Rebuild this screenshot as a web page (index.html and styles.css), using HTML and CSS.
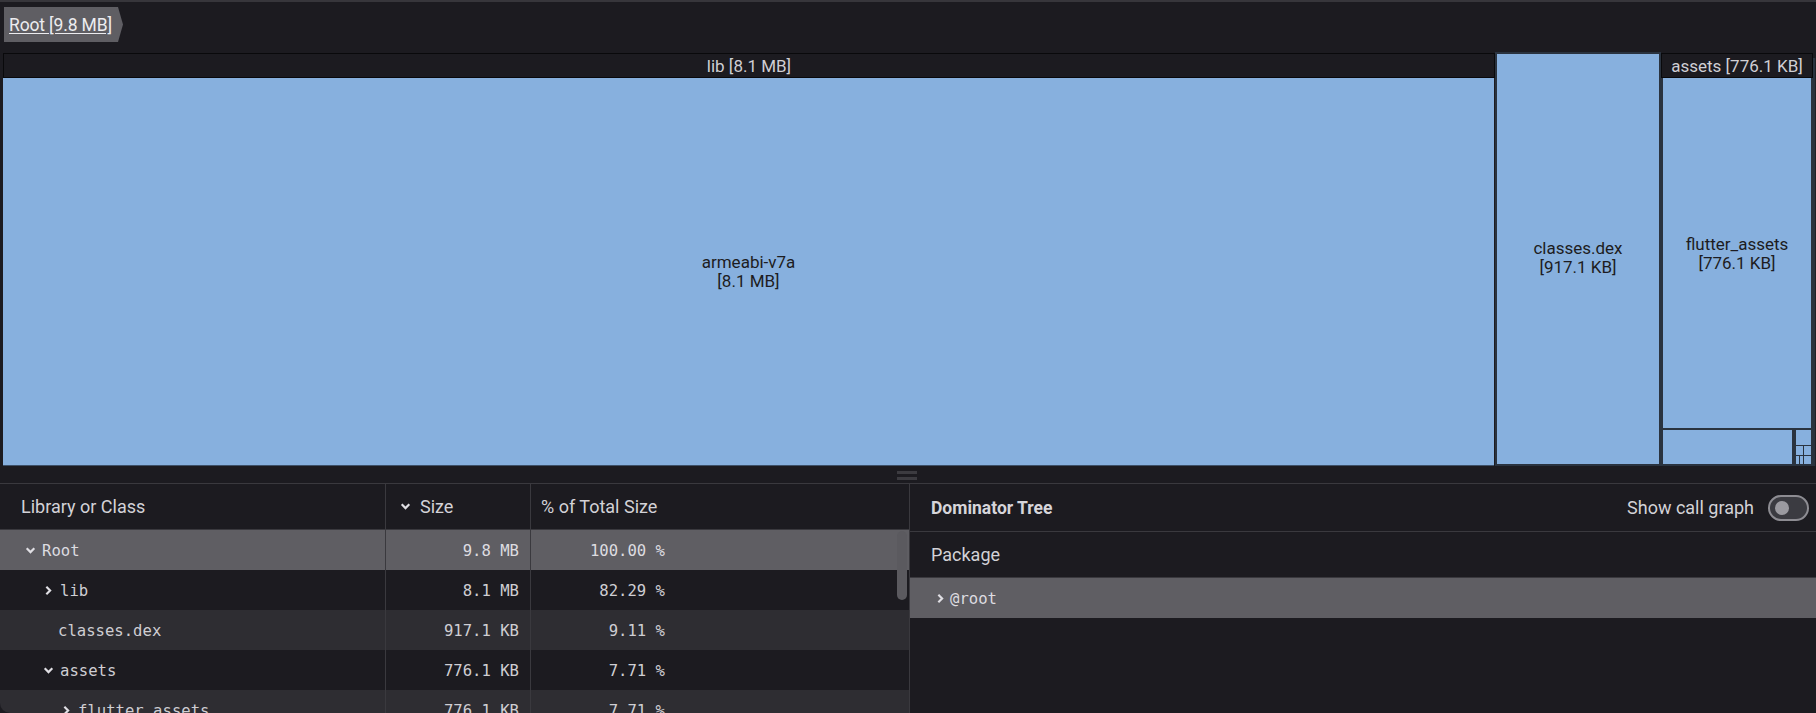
FILE: index.html
```html
<!DOCTYPE html>
<html>
<head>
<meta charset="utf-8">
<link rel="stylesheet" href="styles.css">
</head>
<body>
<div class="app">
  <div class="topline"></div>
  <div class="crumbbar">
    <div class="crumb"><span>Root [9.8 MB]</span></div>
  </div>

  <div class="treemap">
    <div class="node lib">
      <div class="hdr">lib [8.1 MB]</div>
      <div class="leaf arm"><span>armeabi-v7a</span><span>[8.1 MB]</span></div>
    </div>
    <div class="leaf dex"><span>classes.dex</span><span>[917.1 KB]</span></div>
    <div class="node assets">
      <div class="hdr">assets [776.1 KB]</div>
      <div class="leaf fa"><span>flutter_assets</span><span>[776.1 KB]</span></div>
      <div class="arow">
        <div class="leaf sm"></div>
        <div class="tiny">
          <div class="t1"></div>
          <div class="t2"><div class="t3"></div><div class="t3"></div></div>
          <div class="t4"><div class="t5"></div><div class="t5"></div><div class="t5 w"></div></div>
        </div>
      </div>
    </div>
    <div class="node rest"><div class="restin"></div></div>
  </div>

  <div class="handlebar"><div class="handle"><i></i><i></i></div></div>

  <div class="lower">
    <div class="tablepane">
      <div class="trow thead">
        <div class="c1">Library or Class</div>
        <div class="c2"><svg class="chev" viewBox="0 0 12 12"><polyline points="2.5,4 6,7.5 9.5,4"/></svg>Size</div>
        <div class="c3">% of Total Size</div>
      </div>
      <div class="trow sel">
        <div class="c1 mono" style="padding-left:24px"><svg class="chev" viewBox="0 0 12 12"><polyline points="2.5,4 6,7.5 9.5,4"/></svg>Root</div>
        <div class="c2 mono num">9.8 MB</div>
        <div class="c3 mono"><span class="pct">100.00 %</span></div>
      </div>
      <div class="trow">
        <div class="c1 mono" style="padding-left:42px"><svg class="chev" viewBox="0 0 12 12"><polyline points="4,2.5 7.5,6 4,9.5"/></svg>lib</div>
        <div class="c2 mono num">8.1 MB</div>
        <div class="c3 mono"><span class="pct">82.29 %</span></div>
      </div>
      <div class="trow alt">
        <div class="c1 mono" style="padding-left:58px">classes.dex</div>
        <div class="c2 mono num">917.1 KB</div>
        <div class="c3 mono"><span class="pct">9.11 %</span></div>
      </div>
      <div class="trow">
        <div class="c1 mono" style="padding-left:42px"><svg class="chev" viewBox="0 0 12 12"><polyline points="2.5,4 6,7.5 9.5,4"/></svg>assets</div>
        <div class="c2 mono num">776.1 KB</div>
        <div class="c3 mono"><span class="pct">7.71 %</span></div>
      </div>
      <div class="trow alt">
        <div class="c1 mono" style="padding-left:60px"><svg class="chev" viewBox="0 0 12 12"><polyline points="4,2.5 7.5,6 4,9.5"/></svg>flutter_assets</div>
        <div class="c2 mono num">776.1 KB</div>
        <div class="c3 mono"><span class="pct">7.71 %</span></div>
      </div>
      <div class="scrollthumb"></div>
    </div>

    <div class="dompane">
      <div class="domhead">
        <div class="domtitle">Dominator Tree</div>
        <div class="toggle-wrap">
          <span>Show call graph</span>
          <div class="toggle"><div class="knob"></div></div>
        </div>
      </div>
      <div class="pkg">Package</div>
      <div class="domrow mono"><svg class="chev" viewBox="0 0 12 12"><polyline points="4,2.5 7.5,6 4,9.5"/></svg>@root</div>
    </div>
  </div>
</div>
</body>
</html>
```

FILE: styles.css
```css
* { box-sizing: border-box; }
html, body { margin: 0; padding: 0; }
body {
  background: #1c1b20;
  color: #d3d2d7;
  font-family: Roboto, "Noto Sans", sans-serif;
  font-size: 18px;
  width: 1816px;
  height: 713px;
  overflow: hidden;
}
.app { display: flex; flex-direction: column; height: 713px; }

.topline { height: 2px; background: #37363b; flex: none; }

.crumbbar { height: 50px; padding: 5px 0 0 4px; flex: none; }
.crumb {
  width: 119px;
  height: 35px;
  background: #5f5e63;
  clip-path: polygon(0 0, 114px 0, 119px 50%, 114px 100%, 0 100%);
  display: flex;
  align-items: center;
  padding-left: 5px;
}
.crumb span {
  color: #ececef;
  text-decoration: underline;
  text-underline-offset: 2px;
  font-size: 17.5px;
  letter-spacing: -0.15px;
}

/* treemap */
.treemap {
  display: flex;
  height: 414px;
  margin-left: 3px;
  flex: none;
}
.node { display: flex; flex-direction: column; }
.hdr {
  height: 25px;
  margin-top: 1px;
  border: 1px solid #09090b;
  background: #1c1b20;
  color: #d0cfd4;
  display: flex;
  align-items: center;
  justify-content: center;
  font-size: 17px;
  flex: none;
  white-space: nowrap;
  overflow: hidden;
}
.leaf {
  background: #87b0de;
  color: #1d1c21;
  display: flex;
  flex-direction: column;
  align-items: center;
  justify-content: center;
  line-height: 19px;
  font-size: 17px;
}
.lib { width: 1492px; }
.arm { flex: 1; border-bottom: 1px solid #3d5068; margin-right: 1px; }
.dex { width: 166px; border: 2px solid #2a333f; padding-bottom: 2px; }
.assets { width: 152px; }
.fa { flex: 1; border: 2px solid #2a333f; border-top: none; padding-top: 2px; }
.arow { height: 36px; display: flex; flex: none; }
.sm { flex: 1; border: 2px solid #2a333f; border-top: none; }
.tiny {
  width: 19px;
  border: 2px solid #2a333f;
  border-top: none;
  display: flex;
  flex-direction: column;
  background: #2a333f;
  gap: 1px;
}
.t1 { flex: 1; background: #87b0de; }
.t2 { height: 9px; display: flex; gap: 1px; }
.t3 { flex: 1; background: #87b0de; }
.t4 { height: 8px; display: flex; gap: 1px; }
.t5 { width: 3px; background: #87b0de; }
.t5.w { flex: 1; }
.rest { flex: 1; padding-top: 6px; }
.restin { flex: 1; border-left: 2px solid #2a333f; background: #1f2126; }

/* handle */
.handlebar {
  height: 17px;
  display: flex;
  justify-content: center;
  align-items: flex-start;
  padding-top: 5px;
  padding-right: 2px;
  flex: none;
}
.handle { width: 20px; display: flex; flex-direction: column; gap: 3px; }
.handle i { display: block; height: 3px; background: #3c3b40; }

/* lower */
.lower {
  flex: 1;
  display: flex;
  border-top: 1px solid #3a393e;
  overflow: hidden;
  border-bottom-left-radius: 10px;
}
.tablepane {
  width: 910px;
  position: relative;
  border-right: 1px solid #3a393e;
  flex: none;
}
.trow { display: flex; height: 40px; align-items: stretch; }
.trow > div { display: flex; align-items: center; }
.thead { height: 46px; border-bottom: 1px solid #3a393e; }
.thead > div { padding-bottom: 1px; }
.thead .c1 { padding-left: 21px; }
.thead .c2 { padding-left: 13px; }
.thead .c3 { padding-left: 10px; }
.c1 { width: 386px; border-right: 1px solid #3a393e; }
.c2 { width: 145px; border-right: 1px solid #3a393e; }
.c3 { flex: 1; }
.num { justify-content: flex-end; padding-right: 11px; }
.pct { width: 134px; text-align: right; display: block; }
.mono {
  font-family: "DejaVu Sans Mono", "Liberation Mono", monospace;
  font-size: 15.6px;
  color: #cfced3;
  padding-top: 1px;
}
.sel { background: #5f5e63; }
.sel .mono { color: #dddce0; }
.alt { background: #2e2d32; }
.chev {
  width: 13px;
  height: 13px;
  margin-right: 5px;
  flex: none;
}
.chev polyline { fill: none; stroke: #e0dfe4; stroke-width: 2; }
.thead .chev { margin-right: 8px; }
.scrollthumb {
  position: absolute;
  left: 897px;
  top: 47px;
  width: 10px;
  height: 69px;
  border-radius: 5px;
  background: #5b5a5f;
}

.dompane { flex: 1; display: flex; flex-direction: column; }
.domhead {
  height: 48px;
  border-bottom: 1px solid #3a393e;
  display: flex;
  align-items: center;
  justify-content: space-between;
  padding: 0 7px 0 21px;
}
.domtitle { font-weight: 700; color: #d6d5da; font-size: 17.5px; }
.toggle-wrap { display: flex; align-items: center; gap: 14px; color: #d3d2d7; }
.toggle {
  width: 41px;
  height: 26px;
  border: 2px solid #8d8c92;
  border-radius: 13px;
  background: #3b3b41;
  position: relative;
}
.knob {
  position: absolute;
  left: 5px;
  top: 4px;
  width: 14px;
  height: 14px;
  border-radius: 50%;
  background: #9b9aa0;
}
.pkg {
  height: 46px;
  border-bottom: 1px solid #3a393e;
  display: flex;
  align-items: center;
  padding-left: 21px;
  color: #d3d2d7;
}
.domrow {
  height: 40px;
  background: #5f5e63;
  display: flex;
  align-items: center;
  padding-left: 24px;
  color: #dddce0;
}
.domrow .chev { margin-right: 3px; }
```
